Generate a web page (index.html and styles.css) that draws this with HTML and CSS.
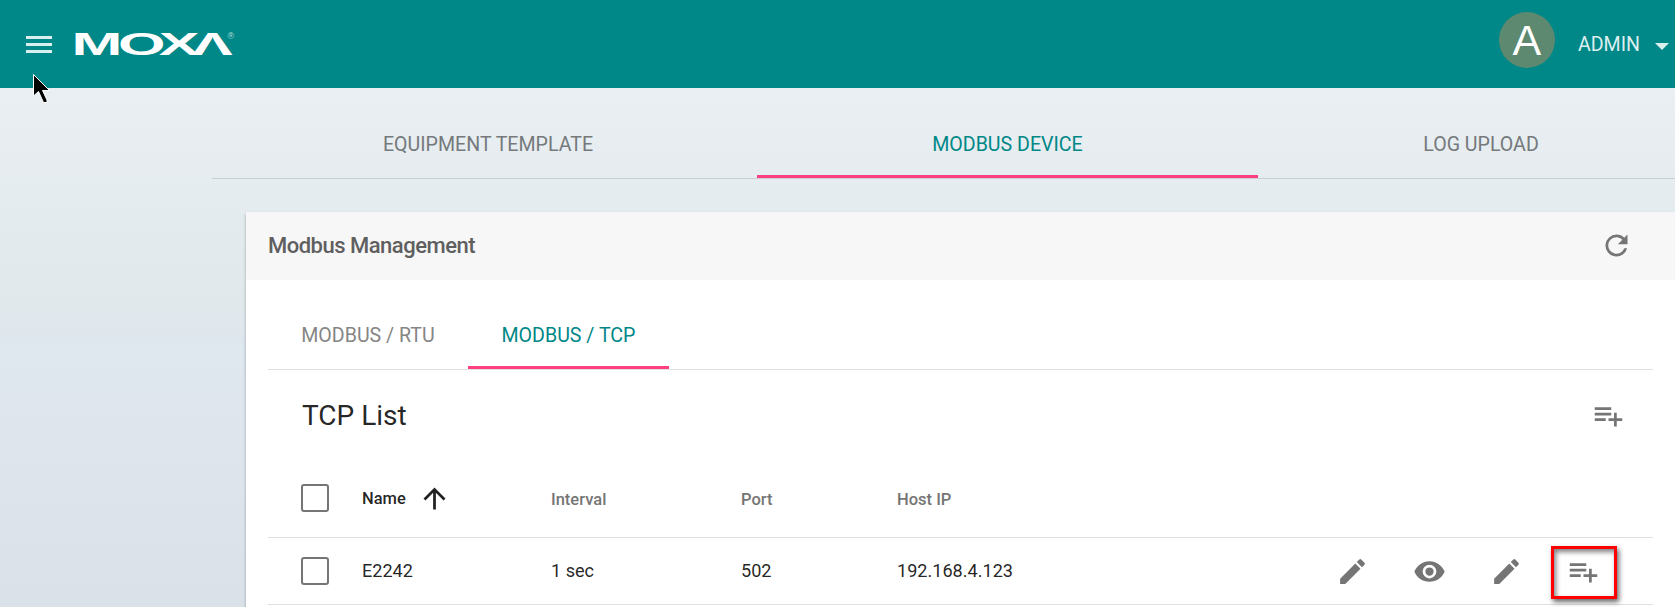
FILE: index.html
```html
<!DOCTYPE html>
<html lang="en">
<head>
<meta charset="utf-8">
<title>Modbus Management</title>
<link rel="stylesheet" href="styles.css">
</head>
<body>
<header class="topbar">
  <svg class="menu" viewBox="0 0 26 18"><path d="M0 0h26v3H0zM0 7h26v3H0zM0 14h26v3H0z"/></svg>
  <svg class="logo" viewBox="0 0 162 30" role="img" aria-label="MOXA">
    <text class="wordmark" transform="translate(-3.5 25.5) scale(1.97 1)" x="0 23.6 44.3 61.2" y="0">MOXΛ</text>
    <text class="reg" x="152.500" y="10">®</text>
  </svg>
  <div class="account">
    <span class="avatar">A</span>
    <span class="user">ADMIN</span>
    <svg class="caret" viewBox="0 0 14 7"><path d="M0 0h14L7 7z"/></svg>
  </div>
</header>
<svg class="cursor" viewBox="0 0 20 32"><path d="M1.500 1.500v21.500l5-4.500 5 11h3.500v-2.500L10.500 17.500h7z"/></svg>
<main class="page">
  <nav class="tabs">
    <span class="tab">EQUIPMENT TEMPLATE</span>
    <span class="tab active">MODBUS DEVICE</span>
    <span class="tab">LOG UPLOAD</span>
  </nav>
  <section class="card">
    <div class="card-head">
      <h1>Modbus Management</h1>
      <svg class="icon" viewBox="0 0 24 24"><path d="M17.650 6.350A7.958 7.958 0 0 0 12 4a8 8 0 1 0 7.730 10h-2.080A6 6 0 1 1 12 6c1.660 0 3.140.690 4.220 1.780L13 11h7V4z"/></svg>
    </div>
    <div class="card-body">
      <nav class="subtabs">
        <span class="subtab">MODBUS / RTU</span>
        <span class="subtab active">MODBUS / TCP</span>
      </nav>
      <div class="list-head">
        <h2>TCP List</h2>
        <svg class="icon" viewBox="0 0 24 24"><path d="M14 10H2v2h12zm0-4H2v2h12zm4 8v-4h-2v4h-4v2h4v4h2v-4h4v-2zM2 16h8v-2H2z"/></svg>
      </div>
      <div class="row head">
        <span class="box"></span>
        <span class="sorted">Name<svg class="icon" viewBox="0 0 24 24"><path d="M4 12l1.410 1.410L11 7.830V20h2V7.830l5.580 5.590L20 12l-8-8z"/></svg></span>
        <span class="label">Interval</span>
        <span class="label">Port</span>
        <span class="label">Host IP</span>
      </div>
      <div class="row item">
        <span class="box"></span>
        <span class="value">E2242</span>
        <span class="value">1 sec</span>
        <span class="value">502</span>
        <span class="value">192.168.4.123</span>
        <div class="actions">
          <svg class="icon" viewBox="0 0 24 24"><path d="M3 17.250V21h3.750L17.810 9.940l-3.750-3.750zM20.710 7.040a1 1 0 0 0 0-1.410l-2.340-2.340a1 1 0 0 0-1.410 0l-1.830 1.830 3.750 3.750z"/></svg>
          <svg class="icon" viewBox="0 0 24 24"><path d="M12 4.500C7 4.500 2.730 7.610 1 12c1.730 4.390 6 7.500 11 7.500s9.270-3.110 11-7.500c-1.730-4.390-6-7.500-11-7.500zM12 17a5 5 0 1 1 0-10 5 5 0 0 1 0 10zm0-8a3 3 0 1 0 0 6 3 3 0 0 0 0-6z"/></svg>
          <svg class="icon" viewBox="0 0 24 24"><path d="M3 17.250V21h3.750L17.810 9.940l-3.750-3.750zM20.710 7.040a1 1 0 0 0 0-1.410l-2.340-2.340a1 1 0 0 0-1.410 0l-1.830 1.830 3.750 3.750z"/></svg>
          <span class="marked"><svg class="icon" viewBox="0 0 24 24"><path d="M14 10H2v2h12zm0-4H2v2h12zm4 8v-4h-2v4h-4v2h4v4h2v-4h4v-2zM2 16h8v-2H2z"/></svg></span>
        </div>
      </div>
    </div>
  </section>
</main>
</body>
</html>
```
FILE: styles.css
```css
* { box-sizing: border-box; }
body {
  margin: 0;
  height: 607px;
  overflow: hidden;
  font-family: Roboto, sans-serif;
  color: rgba(0, 0, 0, .87);
  background: linear-gradient(180deg, #e9eff2 88px, #e3eaed 250px, #e0e8ec 310px, #dfe7ef 350px, #dee5ed 440px, #dae1e9 607px);
}
h1, h2 { margin: 0; }
svg { display: block; flex: none; }
.topbar {
  display: flex;
  align-items: center;
  height: 88px;
  padding: 0 6px 0 26px;
  background: #008787;
}
.menu { width: 26px; height: 18px; margin: 2px 23px 0 0; fill: #d9eeee; }
.logo { width: 162px; height: 30px; overflow: visible; fill: #fff; }
.wordmark { font: bold 31px "Liberation Sans", sans-serif; }
.reg { font: 9px "Liberation Sans", sans-serif; fill: #b5dcdc; }
.account { display: flex; align-items: center; margin-left: auto; }
.avatar {
  width: 56px;
  height: 56px;
  margin: 0 23px 8px 0;
  border-radius: 50%;
  background: #5c8970;
  color: #fff;
  font: 43px/56px "Liberation Sans", sans-serif;
  text-align: center;
}
.user { font-size: 19.600px; color: #dcefef; }
.caret { width: 14px; height: 7px; margin: 5px 0 0 15px; fill: #dcefef; }
.cursor {
  position: absolute;
  left: 32px;
  top: 73px;
  width: 20px;
  height: 32px;
  stroke: #fff;
  stroke-width: 1px;
}
.page { padding-left: 212px; }
.tabs {
  display: grid;
  grid-template-columns: 545px 501px 446px;
  height: 91px;
  width: 1463px;
  border-bottom: 1px solid #c8cfd5;
}
.tab, .subtab {
  display: flex;
  justify-content: center;
  border-bottom: 3px solid transparent;
  font-size: 19.600px;
  line-height: 24px;
  color: #75797c;
}
.tab { padding-top: 45px; }
.tab:first-child { padding-left: 7px; }
.tab.active, .subtab.active { color: #008787; border-color: #ff4081; }
.card {
  height: 395px;
  margin: 33px 0 0 34px;
  background: #fff;
  box-shadow: 0 2px 3px rgba(0, 0, 0, .3);
}
.card-head {
  display: flex;
  align-items: center;
  justify-content: space-between;
  height: 68px;
  padding: 0 42px 1px 22px;
  background: #f7f7f7;
}
.card-head h1 { font-size: 22px; font-weight: 500; letter-spacing: -.5px; color: #5f5f5f; }
.icon { width: 33px; height: 33px; fill: #757575; }
.card-body { padding: 0 22px; }
.subtabs { display: flex; height: 90px; border-bottom: 1px solid #e0e0e0; }
.subtab { width: 201px; padding-top: 44px; color: #858585; }
.subtab:first-child { width: 200px; }
.list-head {
  display: flex;
  align-items: center;
  justify-content: space-between;
  height: 90px;
  padding: 0 28px 0 34px;
}
.list-head h2 { font-size: 28px; font-weight: 400; }
.row {
  display: grid;
  grid-template-columns: 61px 189px 190px 156px 1fr auto;
  align-items: center;
  padding-left: 33px;
  border-bottom: 1px solid #e0e0e0;
}
.head { height: 78px; padding-bottom: 1px; font-size: 16.500px; font-weight: 500; color: #757575; }
.label { padding-top: 2px; }
.item { height: 67px; font-size: 18.100px; }
.value { padding-bottom: 1px; }
.box { width: 28px; height: 28px; border: 2px solid #757575; border-radius: 3px; }
.sorted { display: flex; align-items: center; color: rgba(0, 0, 0, .87); }
.sorted .icon { margin-left: 12px; fill: #212121; }
.actions { display: flex; align-items: center; gap: 44px; padding-right: 36px; }
.marked {
  display: flex;
  align-items: center;
  justify-content: center;
  width: 66px;
  height: 53px;
  margin: 2px 0 0 -16px;
  padding: 0 2px 2px 0;
  border: 3px solid #f00;
  box-shadow: 2px 3px 5px rgba(0, 0, 0, .6), inset 2px 3px 5px rgba(0, 0, 0, .5);
}
```
